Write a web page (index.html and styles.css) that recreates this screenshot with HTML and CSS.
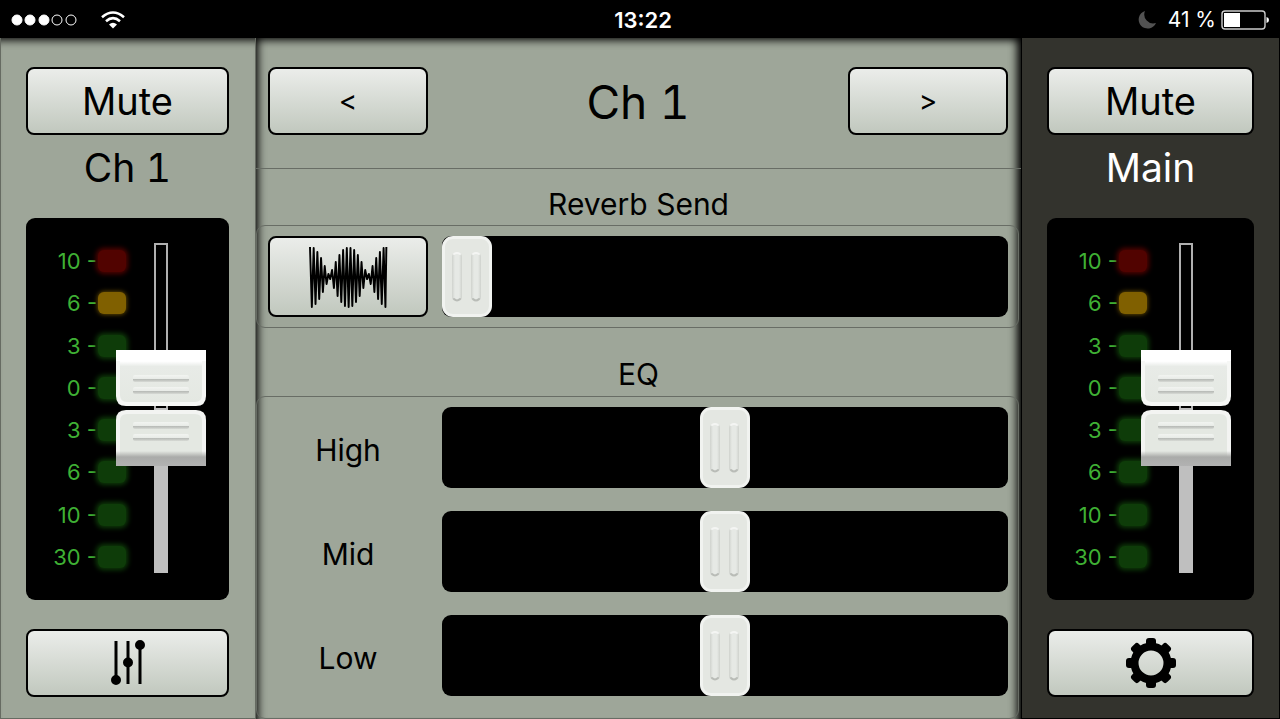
FILE: index.html
```html
<!DOCTYPE html>
<html lang="en">

<head>
    <meta charset="UTF-8">
    <meta name="viewport" content="width=device-width, initial-scale=1.0">
    <title>Mixer</title>
    <link rel="stylesheet" href="styles.css">
</head>

<body>
    <header class="status-bar">
        <div class="status-left">
            <svg width="68" height="14" viewBox="0 0 68 14" fill="#fff" stroke="#fff">
                <circle cx="6" cy="7" r="5" />
                <circle cx="19" cy="7" r="5" />
                <circle cx="33" cy="7" r="5" />
                <circle cx="46" cy="7" r="5" fill="none" />
                <circle cx="60" cy="7" r="5" fill="none" />
            </svg>
            <svg class="wifi" width="24" height="18" viewBox="0 0 24 18" fill="none" stroke="#fff" stroke-width="2.6">
                <path d="M1 6.2 Q12 -3.2 23 6.2" />
                <path d="M5 10.2 Q12 4.2 19 10.2" />
                <path d="M12 17.5 L8 13.4 Q12 10.2 16 13.4 Z" fill="#fff" stroke="none" />
            </svg>
        </div>
        <time class="clock">13:22</time>
        <div class="status-right">
            <svg width="19" height="19" viewBox="0 0 19 19">
                <path d="M7 1 A9 9 0 1 0 18 13 A9 9 0 0 1 7 1 Z" fill="#525252" />
            </svg>
            <span>41 %</span>
            <svg width="48" height="20" viewBox="0 0 48 20">
                <rect x="1" y="1" width="43" height="18" rx="3" fill="none" stroke="#ccc" stroke-width="1.4" />
                <rect x="3" y="3" width="16" height="14" fill="#fff" />
                <path d="M45.5 7 Q48 7.500 48 10 Q48 12.500 45.500 13 Z" fill="#fff" />
            </svg>
        </div>
    </header>

    <main class="mixer">
        <section class="channel">
            <button class="btn btn-text">Mute</button>
            <label class="channel-name" for="ch-fader">Ch 1</label>
            <div class="meter">
                <ul class="scale">
                    <li>10 -<i class="led red"></i></li>
                    <li>6 -<i class="led yellow"></i></li>
                    <li>3 -<i class="led"></i></li>
                    <li>0 -<i class="led"></i></li>
                    <li>3 -<i class="led"></i></li>
                    <li>6 -<i class="led"></i></li>
                    <li>10 -<i class="led"></i></li>
                    <li>30 -<i class="led"></i></li>
                </ul>
                <input class="fader" id="ch-fader" type="range" min="0" max="100" value="50">
            </div>
            <button class="btn" aria-label="Faders">
                <svg width="36" height="48" viewBox="0 0 36 48" stroke="#000" stroke-width="3">
                    <path d="M6 2 V44 M18 2 V45 M30 5 V45" />
                    <circle cx="6" cy="41" r="3.500" />
                    <circle cx="18" cy="23.500" r="3.500" />
                    <circle cx="30" cy="6" r="3.500" />
                </svg>
            </button>
        </section>

        <section class="detail">
            <div class="detail-head">
                <button class="btn" aria-label="Previous channel">&lt;</button>
                <h1>Ch 1</h1>
                <button class="btn" aria-label="Next channel">&gt;</button>
            </div>

            <h2>Reverb Send</h2>
            <div class="group">
                <div class="row">
                    <button class="btn" aria-label="Reverb type">
                        <svg width="80" height="64" viewBox="0 0 80 64" fill="none" stroke="#000">
                            <g transform="translate(2 32) scale(.92 1)">
                                <polyline stroke-width="2.100" stroke-linejoin="round" points="0,-30 2,30 4,-29 6,27 8,-25 10,22 12,-19 14,15 16,-11 18,7 20,-3 22,2 24,-7 26,11 28,-15 30,19 32,-22 34,25 36,-27 38,29 40,-29 42,30 44,-29 46,29 48,-27 50,25 52,-22 54,19 56,-15 58,11 60,-7 62,2 64,-3 66,7 68,-11 70,15 72,-19 74,22 76,-25 78,27 80,-29 82,30 83,-30" />
                            </g>
                        </svg>
                    </button>
                    <input class="slider" type="range" min="0" max="100" value="0" aria-label="Reverb Send">
                </div>
            </div>

            <h2 class="eq-title">EQ</h2>
            <div class="group eq">
                <div class="row">
                    <label for="high">High</label>
                    <input class="slider" id="high" type="range" min="0" max="100" value="50">
                </div>
                <div class="row">
                    <label for="mid">Mid</label>
                    <input class="slider" id="mid" type="range" min="0" max="100" value="50">
                </div>
                <div class="row">
                    <label for="low">Low</label>
                    <input class="slider" id="low" type="range" min="0" max="100" value="50">
                </div>
            </div>
        </section>

        <section class="channel main-channel">
            <button class="btn btn-text">Mute</button>
            <label class="channel-name" for="main-fader">Main</label>
            <div class="meter">
                <ul class="scale">
                    <li>10 -<i class="led red"></i></li>
                    <li>6 -<i class="led yellow"></i></li>
                    <li>3 -<i class="led"></i></li>
                    <li>0 -<i class="led"></i></li>
                    <li>3 -<i class="led"></i></li>
                    <li>6 -<i class="led"></i></li>
                    <li>10 -<i class="led"></i></li>
                    <li>30 -<i class="led"></i></li>
                </ul>
                <input class="fader" id="main-fader" type="range" min="0" max="100" value="50">
            </div>
            <button class="btn" aria-label="Settings">
                <svg width="52" height="52" viewBox="-26 -26 52 52">
                    <circle r="16.500" fill="none" stroke="#000" stroke-width="8" />
                    <g>
                        <rect x="-5" y="-25" width="10" height="50" rx="3" clip-path="url(#rim)" />
                        <rect x="-5" y="-25" width="10" height="50" rx="3" clip-path="url(#rim)" transform="rotate(45)" />
                        <rect x="-5" y="-25" width="10" height="50" rx="3" clip-path="url(#rim)" transform="rotate(90)" />
                        <rect x="-5" y="-25" width="10" height="50" rx="3" clip-path="url(#rim)" transform="rotate(135)" />
                    </g>
                    <clipPath id="rim">
                        <path d="M-26 -26 H26 V-16 H-26 Z M-26 16 H26 V26 H-26 Z" />
                    </clipPath>
                </svg>
            </button>
        </section>
    </main>
</body>

</html>
```
FILE: styles.css
```css
* {
    box-sizing: border-box;
}

body {
    display: flex;
    flex-direction: column;
    min-height: 100vh;
    margin: 0;
    background-color: #000;
    color: #000;
    font-family: Inter, "Liberation Sans", sans-serif;
}

/* status bar */

.status-bar {
    display: grid;
    grid-template-columns: 1fr auto 1fr;
    align-items: center;
    height: 38px;
    padding: 1px 11px 0;
    color: #fff;
    font-size: 21px;
}

.status-left,
.status-right {
    display: flex;
    align-items: center;
}

.wifi {
    margin-left: 22px;
}

.clock {
    padding-left: 6px;
    font-size: 22px;
    font-weight: 600;
}

.status-right {
    justify-content: flex-end;
    gap: 5px;
}

.status-right span {
    margin-left: 6px;
}

/* columns */

.mixer {
    display: grid;
    grid-template-columns: 20% 1fr 259px;
    flex: 1;
}

.channel {
    display: flex;
    flex-direction: column;
    padding: 29px 26px 21px 25px;
    border: 1px solid #666b62;
    border-top: none;
    background-color: #9ea699;
    box-shadow: inset 0 10px 8px -8px #000;
}

.main-channel {
    padding: 29px 25px 21px;
    border-color: #000;
    background-color: #33332d;
    box-shadow: none;
    color: #fff;
}

.channel-name {
    height: 83px;
    line-height: 65px;
    font-size: 39px;
    font-variant-numeric: tabular-nums;
    text-align: center;
}

.btn {
    display: flex;
    align-items: center;
    justify-content: center;
    height: 68px;
    padding: 0;
    border: 2px solid #000;
    border-radius: 8px;
    background: linear-gradient(#ebedea, #c1c8be);
    color: #000;
    font-family: inherit;
    font-size: 28px;
}

.btn-text {
    font-size: 38px;
}

/* level meter with the fader over it */

.meter {
    display: grid;
    flex: 1;
    margin-bottom: 29px;
    border-radius: 9px;
    background-color: #000;
}

.scale {
    display: flex;
    flex-direction: column;
    grid-area: 1 / 1;
    width: 100px;
    margin: 0;
    padding: 22px 0;
    list-style: none;
    color: #3fb034;
    font-size: 22px;
}

.scale li {
    display: flex;
    flex: 1;
    align-items: center;
    justify-content: flex-end;
}

.led {
    width: 28px;
    height: 22px;
    margin-left: 1px;
    border-radius: 6px;
    background-color: #0e3c09;
    box-shadow: 0 0 5px 2px #0e3c09;
}

.red {
    background-color: #510300;
    box-shadow: 0 0 5px 2px #510300;
}

.yellow {
    background-color: #806000;
    box-shadow: 0 0 5px #806000;
}

.fader {
    grid-area: 1 / 1;
    justify-self: end;
    width: 90px;
    height: 330px;
    margin: 25px 23px 0 0;
    appearance: none;
    background: none;
    writing-mode: vertical-lr;
    direction: rtl;
}

.fader::-webkit-slider-runnable-track {
    width: 90px;
    background:
        linear-gradient(#000, #000) center 2px / 10px 163px no-repeat,
        linear-gradient(#b0b0b0 50%, #bfbfbf 50%) center / 14px 100% no-repeat;
}

.fader::-webkit-slider-thumb {
    width: 90px;
    height: 116px;
    appearance: none;
    background: url("data:image/svg+xml,%3Csvg xmlns='http://www.w3.org/2000/svg' viewBox='0 0 90 116'%3E%3Cdefs%3E%3ClinearGradient id='a' x2='0' y2='1'%3E%3Cstop stop-color='%23fff'/%3E%3Cstop offset='.15' stop-color='%23fff'/%3E%3Cstop offset='.26' stop-color='%23e8ebe7'/%3E%3Cstop offset='1' stop-color='%23e4e8e2'/%3E%3C/linearGradient%3E%3ClinearGradient id='b' x2='0' y2='1'%3E%3Cstop stop-color='%23aaaba9' stop-opacity='0'/%3E%3Cstop offset='.4' stop-color='%23aaaba9'/%3E%3Cstop offset='1' stop-color='%23b2b2b2'/%3E%3C/linearGradient%3E%3ClinearGradient id='c' x2='0' y2='1'%3E%3Cstop stop-color='%23f2f4f1'/%3E%3Cstop offset='.5' stop-color='%23e9ece8'/%3E%3Cstop offset='.65' stop-color='%23b8bbb7'/%3E%3Cstop offset='1' stop-color='%23d8dbd6'/%3E%3C/linearGradient%3E%3C/defs%3E%3Cpath d='M0 0H90V46Q90 56 80 56H10Q0 56 0 46Z' fill='%23f6f7f5'/%3E%3Cpath d='M4 4H86V45Q86 52 79 52H11Q4 52 4 45Z' fill='url(%23a)'/%3E%3Cpath d='M0 0H90V11H0Z' fill='%23fff'/%3E%3Cpath d='M0 116V70Q0 60 10 60H80Q90 60 90 70V116Z' fill='%23f3f4f2'/%3E%3Cpath d='M4 116V71Q4 64 11 64H79Q86 64 86 71V116Z' fill='%23e4e8e2'/%3E%3Cpath d='M0 101H90V116H0Z' fill='url(%23b)'/%3E%3Cg fill='url(%23c)'%3E%3Crect x='17' y='25' width='56' height='7' rx='2'/%3E%3Crect x='17' y='37' width='56' height='7' rx='2'/%3E%3Crect x='17' y='72' width='56' height='7' rx='2'/%3E%3Crect x='17' y='84' width='56' height='7' rx='2'/%3E%3C/g%3E%3C/svg%3E") no-repeat;
}

/* channel details */

.detail {
    display: flex;
    flex-direction: column;
    background-color: #9ea699;
    box-shadow: inset 0 10px 8px -8px #000, inset 10px 0 8px -8px #000, inset -12px 0 8px -8px #000;
}

.detail-head {
    display: flex;
    justify-content: space-between;
    height: 131px;
    padding: 29px 13px 0 12px;
    border-bottom: 1px solid #686d65;
}

.detail-head .btn,
.row .btn {
    width: 160px;
}

h1,
h2 {
    margin: 0;
    font-weight: 400;
    text-align: center;
}

h1 {
    line-height: 70px;
    font-size: 46px;
    font-variant-numeric: tabular-nums;
}

h2 {
    height: 56px;
    line-height: 70px;
    font-size: 30px;
}

.eq-title {
    height: 68px;
    line-height: 92px;
}

.group {
    display: flex;
    flex-direction: column;
    gap: 23px;
    margin-right: 2px;
    padding: 10px 10px 10px 11px;
    border: 1px solid #686d65;
    border-radius: 9px;
}

.eq {
    flex: 1;
    padding-bottom: 22px;
}

.row {
    display: grid;
    grid-template-columns: 160px 1fr;
    gap: 14px;
    align-items: center;
}

.row .btn {
    height: 81px;
}

.row label {
    padding-top: 4px;
    font-size: 30px;
    text-align: center;
}

.slider {
    width: 100%;
    height: 81px;
    margin: 0;
    border-radius: 9px;
    appearance: none;
    background-color: #000;
}

.slider::-webkit-slider-thumb {
    width: 50px;
    height: 81px;
    appearance: none;
    border: 3px solid #f1f3f0;
    border-radius: 11px;
    background: url("data:image/svg+xml,%3Csvg xmlns='http://www.w3.org/2000/svg' viewBox='0 0 44 75'%3E%3Cdefs%3E%3ClinearGradient id='a'%3E%3Cstop stop-color='%23cfd2cd'/%3E%3Cstop offset='.3' stop-color='%23e6e9e5'/%3E%3Cstop offset='.7' stop-color='%23e6e9e5'/%3E%3Cstop offset='1' stop-color='%23cfd2cd'/%3E%3C/linearGradient%3E%3C/defs%3E%3Cg fill='url(%23a)'%3E%3Crect x='7' y='14' width='10' height='48' rx='4'/%3E%3Crect x='26' y='14' width='10' height='48' rx='4'/%3E%3C/g%3E%3Cg fill='none' stroke-width='2' stroke-linecap='round'%3E%3Cpath d='M9 15Q12 13 15 15M28 15Q31 13 34 15' stroke='%23f4f5f3'/%3E%3Cpath d='M9 60Q12 63 15 60M28 60Q31 63 34 60' stroke='%23b9bcb7'/%3E%3C/g%3E%3C/svg%3E") #e4e7e2 no-repeat;
}
```
